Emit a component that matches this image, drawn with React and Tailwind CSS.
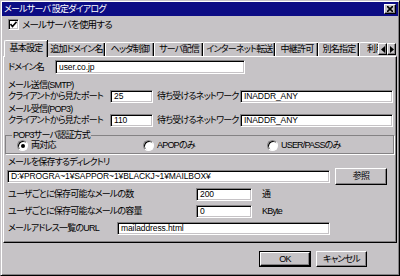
const ui =
  "font-['Liberation_Sans','Noto_Sans_CJK_JP',sans-serif] [font-feature-settings:'palt'] text-[9px] leading-[11px] tracking-[-0.8px] text-black whitespace-nowrap";

const tabs = [
  ['基本設定', 43],
  ['追加ドメイン名', 58],
  ['ヘッダ制御', 49],
  ['サーバ配信', 49],
  ['インターネット転送', 72],
  ['中継許可', 43],
  ['別名指定', 41],
  ['利用制限', 48],
];

function Sunken({ children, className = '' }) {
  return (
    <div
      className={`box-border bg-white border border-t-[#848284] border-l-[#848284] border-b-white border-r-white shadow-[inset_1px_1px_0_#000,inset_-1px_-1px_0_#c6c3c6] ${className}`}
    >
      {children}
    </div>
  );
}

function Field({ value, className = '' }) {
  return (
    <Sunken className={`flex items-center pl-[3px] overflow-hidden text-[8.5px] tracking-[-0.1px] ${className}`}>
      {value}
    </Sunken>
  );
}

function Button({ children, className = '' }) {
  return (
    <div
      className={`box-border flex items-center justify-center bg-[#c6c3c6] border border-t-white border-l-white border-b-black border-r-black shadow-[inset_-1px_-1px_0_#848284] ${className}`}
    >
      {children}
    </div>
  );
}

function Radio({ checked }) {
  return (
    <div className="w-[11px] h-[11px] rounded-full bg-white border border-t-[#848284] border-l-[#848284] border-b-white border-r-white shadow-[inset_1px_1px_0_#000] flex items-center justify-center">
      {checked && <div className="w-[4px] h-[4px] rounded-full bg-black" />}
    </div>
  );
}

function Arrow({ dir }) {
  return (
    <Button className="w-[9px] h-[12px]">
      <svg width="4" height="7" viewBox="0 0 4 7">
        {dir === 'left' ? <path d="M4 0 L0 3.5 L4 7 Z" fill="#000" /> : <path d="M0 0 L4 3.5 L0 7 Z" fill="#000" />}
      </svg>
    </Button>
  );
}

export default function App() {
  return (
    <div
      className={`${ui} w-[400px] h-[276px] box-border bg-[#c6c3c6] border border-t-[#c6c3c6] border-l-[#c6c3c6] border-b-black border-r-black shadow-[inset_1px_1px_0_#fff,inset_-1px_-1px_0_#848284] p-[1px] flex flex-col overflow-hidden`}
    >
      {/* title bar */}
      <div className="h-[14px] bg-[#0c0c84] flex items-center justify-between pl-[2px] pr-[2px] text-white">
        <span>メールサーバ 設定ダイアログ</span>
        <Button className="w-[12px] h-[10px]">
          <svg width="6" height="6" viewBox="0 0 6 6">
            <path d="M0 0 L6 6 M6 0 L0 6" stroke="#000" strokeWidth="1.6" />
          </svg>
        </Button>
      </div>

      {/* checkbox */}
      <div className="mt-[3px] h-[11px] flex items-center pl-[6px] gap-[3px]">
        <Sunken className="w-[11px] h-[11px] flex items-center justify-center">
          <svg width="7" height="7" viewBox="0 0 7 7">
            <path d="M0.5 3 L2.5 5.5 L6.5 0.8" stroke="#000" strokeWidth="1.6" fill="none" />
          </svg>
        </Sunken>
        <span className="text-[9.5px]">メールサーバを使用する</span>
      </div>

      {/* tabs */}
      <div className="mt-[10px] h-[17px] -mb-px flex pl-[2px]">
        <div className="flex items-end w-[374px] overflow-hidden">
          {tabs.map(([label, w], i) =>
            i === 0 ? (
              <div
                key={label}
                style={{ width: w }}
                className="relative z-10 shrink-0 h-[17px] bg-[#c6c3c6] border-t border-l border-white rounded-tl-[2px] shadow-[inset_-1px_0_0_#848284,1px_0_0_#000] flex items-center justify-center pb-[2px]"
              >
                {label}
              </div>
            ) : (
              <div
                key={label}
                style={{ width: w }}
                className="shrink-0 h-[14px] mb-[1px] border-t border-l border-white rounded-tl-[2px] shadow-[inset_-1px_0_0_#000,inset_-2px_0_0_#848284] flex items-center justify-center"
              >
                {label}
              </div>
            )
          )}
        </div>
        <div className="flex mt-[3px] self-start">
          <Arrow dir="left" />
          <Arrow dir="right" />
        </div>
      </div>

      {/* panel */}
      <div className="ml-[1px] w-[394px] h-[187px] box-border border border-t-white border-l-white border-b-black border-r-black shadow-[inset_-1px_-1px_0_#848284] flex flex-col">
        <div className="mt-[3px] h-[14px] flex items-center pl-[4px]">
          <span className="w-[47px]">ドメイン名</span>
          <Field value="user.co.jp" className="w-[190px] h-[14px]" />
        </div>

        <div className="mt-[6px] h-[10px] flex items-center pl-[4px]">メール送信(SMTP)</div>
        <div className="h-[13px] flex items-center pl-[4px]">
          <span className="w-[102px]">クライアントから見たポート</span>
          <Field value="25" className="w-[43px] h-[13px]" />
          <span className="ml-[4px] w-[83px]">待ち受けるネットワーク</span>
          <Field value="INADDR_ANY" className="w-[153px] h-[13px]" />
        </div>

        <div className="mt-[1px] h-[10px] flex items-center pl-[4px]">メール受信(POP3)</div>
        <div className="h-[13px] flex items-center pl-[4px]">
          <span className="w-[102px]">クライアントから見たポート</span>
          <Field value="110" className="w-[43px] h-[13px]" />
          <span className="ml-[4px] w-[83px]">待ち受けるネットワーク</span>
          <Field value="INADDR_ANY" className="w-[153px] h-[13px]" />
        </div>

        <fieldset className="mt-[3px] ml-[1px] w-[389px] box-border border border-[#848284] shadow-[1px_1px_0_#fff] px-[6px] pb-[2px]">
          <legend className="px-[1px] h-[10px] leading-[10px]">POP3サーバ認証方式</legend>
          <div className="h-[11px] flex items-center">
            <div className="ml-[5px] w-[126px] flex items-center gap-[3px]">
              <Radio checked />
              <span>両対応</span>
            </div>
            <div className="w-[124px] flex items-center gap-[3px]">
              <Radio />
              <span>APOPのみ</span>
            </div>
            <div className="flex items-center gap-[3px]">
              <Radio />
              <span>USER/PASSのみ</span>
            </div>
          </div>
        </fieldset>

        <div className="mt-[3px] h-[11px] flex items-center pl-[4px]">メールを保存するディレクトリ</div>
        <div className="h-[17px] flex items-center pl-[3px]">
          <Field value="D:¥PROGRA~1¥SAPPOR~1¥BLACKJ~1¥MAILBOX¥" className="w-[323px] h-[13px]" />
          <Button className="ml-[5px] w-[52px] h-[17px]">参照</Button>
        </div>

        <div className="mt-[3px] h-[13px] flex items-center pl-[4px]">
          <span className="w-[188px]">ユーザごとに保存可能なメールの数</span>
          <Field value="200" className="w-[56px] h-[13px]" />
          <span className="ml-[10px]">通</span>
        </div>
        <div className="mt-[4px] h-[13px] flex items-center pl-[4px]">
          <span className="w-[188px]">ユーザごとに保存可能なメールの容量</span>
          <Field value="0" className="w-[56px] h-[13px]" />
          <span className="ml-[10px]">KByte</span>
        </div>
        <div className="mt-[4px] h-[13px] flex items-center pl-[4px]">
          <span className="w-[109px]">メールアドレス一覧のURL</span>
          <Field value="mailaddress.html" className="w-[213px] h-[13px]" />
        </div>
      </div>

      {/* footer */}
      <div className="mt-[8px] flex pl-[257px] gap-[5px]">
        <div className="border border-black">
          <Button className="w-[50px] h-[14px]">OK</Button>
        </div>
        <Button className="w-[51px] h-[16px]">キャンセル</Button>
      </div>
    </div>
  );
}
